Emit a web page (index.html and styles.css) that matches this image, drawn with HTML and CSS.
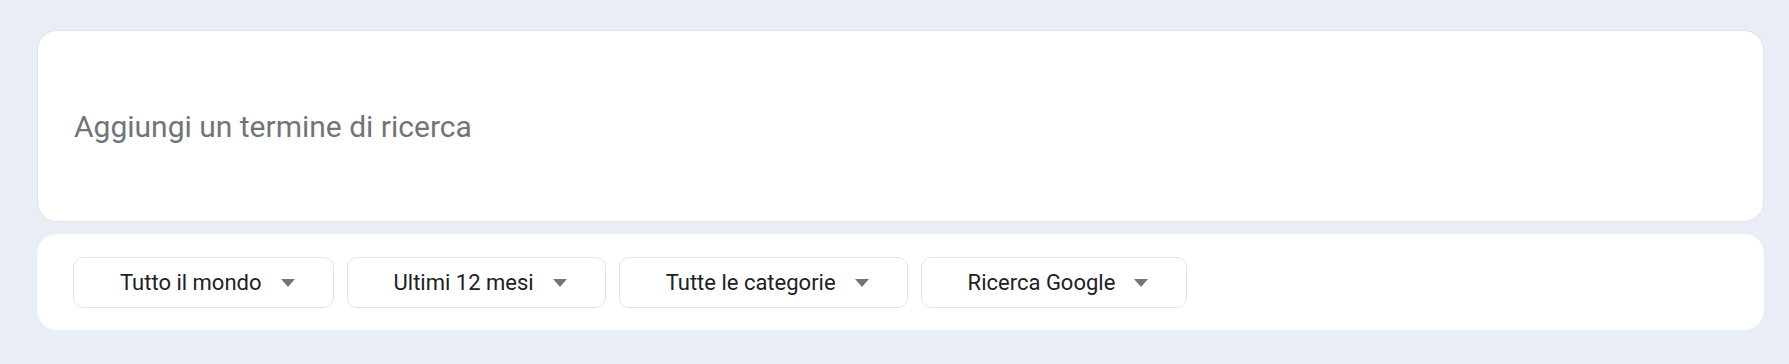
FILE: index.html
```html
<!DOCTYPE html>
<html lang="it">
<head>
    <meta charset="UTF-8">
    <meta name="viewport" content="width=device-width, initial-scale=1.0">
    <title>Esplora - Google Trends</title>
    <link rel="stylesheet" href="styles.css">
</head>
<body>
    <div class="explore-container">
        <div class="search-card">
            <input type="text" class="search-input" placeholder="Aggiungi un termine di ricerca">
        </div>

        <div class="filter-card">
            <button class="filter-button">
                <span>Tutto il mondo</span>
                <span class="caret"></span>
            </button>
            <button class="filter-button">
                <span>Ultimi 12 mesi</span>
                <span class="caret"></span>
            </button>
            <button class="filter-button">
                <span>Tutte le categorie</span>
                <span class="caret"></span>
            </button>
            <button class="filter-button">
                <span>Ricerca Google</span>
                <span class="caret"></span>
            </button>
        </div>
    </div>
</body>
</html>
```

FILE: styles.css
```css
* {
    margin: 0;
    padding: 0;
    box-sizing: border-box;
    font-family: Roboto, "Liberation Sans", sans-serif;
}

body {
    background: #e9eef6;
    min-height: 100vh;
    padding: 30px 25px 0 37px;
}

.explore-container {
    display: flex;
    flex-direction: column;
    gap: 12px;
}

.search-card {
    background: white;
    border: 1px solid #e1e3e6;
    border-radius: 20px;
    height: 192px;
    display: flex;
    align-items: center;
    padding: 0 36px;
}

.search-input {
    width: 100%;
    border: none;
    outline: none;
    background: transparent;
    font-size: 30px;
    color: #202124;
}

.search-input::placeholder {
    color: #70757a;
}

.filter-card {
    background: white;
    border-radius: 20px;
    padding: 23px 36px 22px;
    display: flex;
    gap: 13px;
}

.filter-button {
    height: 51px;
    display: flex;
    align-items: center;
    gap: 19px;
    padding: 0 38px 0 46px;
    background: white;
    border: 1px solid #e3e3e3;
    border-radius: 10px;
    font-size: 22px;
    color: #202124;
    cursor: pointer;
}

.caret {
    width: 0;
    height: 0;
    border-left: 7px solid transparent;
    border-right: 7px solid transparent;
    border-top: 8px solid #757575;
}
```
